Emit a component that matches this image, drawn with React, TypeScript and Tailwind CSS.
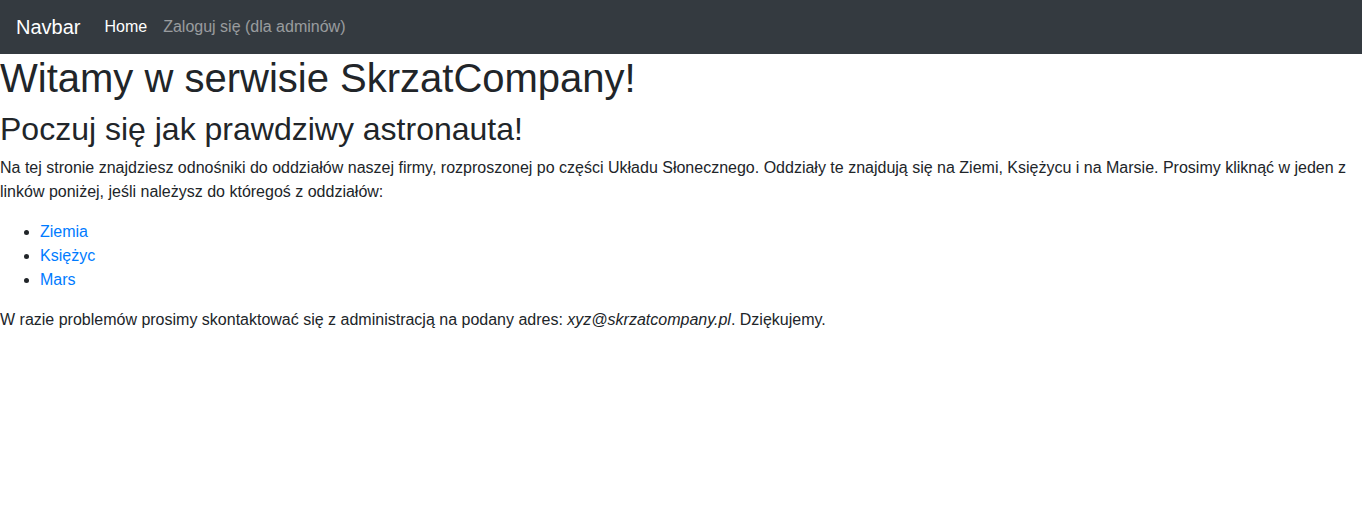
import React from 'react';

const App: React.FC = () => {
  return (
    <div className="min-h-[519px] bg-white text-[#212529] font-['Segoe_UI','Liberation_Sans',Arial,sans-serif] text-base leading-6">
      <nav className="flex items-center h-[54px] px-4 bg-[#343a40]">
        <a href="#" className="text-xl text-white mr-4 leading-[30px]">Navbar</a>
        <div className="flex">
          <a href="#" className="px-2 text-white">Home</a>
          <a href="#" className="px-2 text-white/50">Zaloguj się (dla adminów)</a>
        </div>
      </nav>

      <h1 className="text-[40px] leading-[48px] font-medium mb-2">Witamy w serwisie SkrzatCompany!</h1>
      <h2 className="text-[32px] leading-[38px] font-medium mb-2">Poczuj się jak prawdziwy astronauta!</h2>
      <p className="mb-4">
        Na tej stronie znajdziesz odnośniki do oddziałów naszej firmy, rozproszonej po części Układu Słonecznego. Oddziały te znajdują się na Ziemi, Księżycu i na Marsie. Prosimy kliknąć w jeden z linków poniżej, jeśli należysz do któregoś z oddziałów:
      </p>
      <ul className="list-disc pl-10 mb-4">
        <li><a href="#" className="text-[#007bff]">Ziemia</a></li>
        <li><a href="#" className="text-[#007bff]">Księżyc</a></li>
        <li><a href="#" className="text-[#007bff]">Mars</a></li>
      </ul>
      <p>
        W razie problemów prosimy skontaktować się z administracją na podany adres: <em>xyz@skrzatcompany.pl</em>. Dziękujemy.
      </p>
    </div>
  );
};

export default App;
